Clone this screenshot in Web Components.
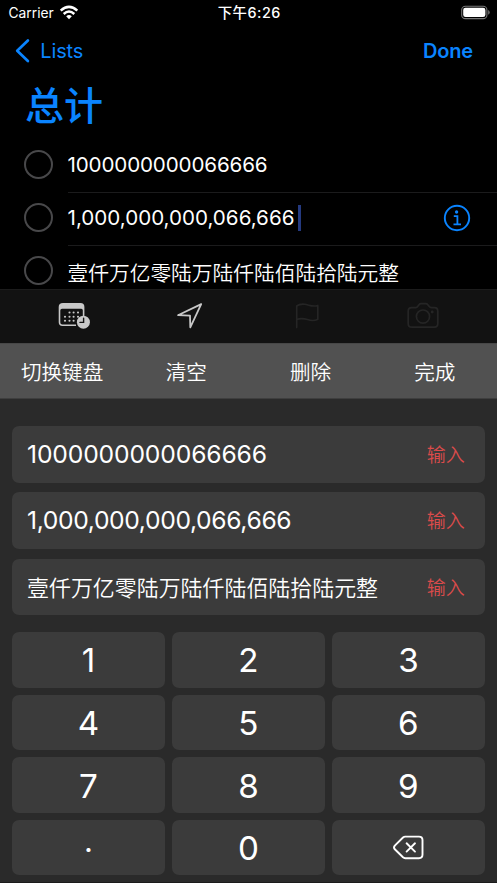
<!DOCTYPE html>
<html lang="zh-CN">
<head>
<meta charset="utf-8">
<title>总计</title>
<style>
html,body{margin:0;padding:0;background:#000;overflow:hidden}
body{width:497px;height:883px;font-family:Inter,"Noto Sans CJK SC",sans-serif;color:#fff}
</style>
</head>
<body>
<reminders-app></reminders-app>
<script>
const define = (name, css, html) => customElements.define(name, class extends HTMLElement {
  constructor() {
    super();
    const t = document.createElement('template');
    t.innerHTML = `<style>:host{box-sizing:border-box}svg{display:block;overflow:visible}${css}</style>${html}`;
    this.attachShadow({mode: 'open'}).append(t.content.cloneNode(true));
  }
});

define('status-bar', `
:host{display:grid;grid-template-columns:1fr auto 1fr;align-items:center;height:25px;padding:1px 7px 0 8.5px;font-size:13.8px;line-height:24px}
.l{display:flex;align-items:center;gap:6px}
.time{font-weight:500;font-size:14.4px;letter-spacing:.5px}
.r{display:flex;justify-content:flex-end}`,
`<div class="l"><span>Carrier</span><svg width="18" height="14" viewBox="0 0 18 14" fill="none" stroke="#fff" stroke-width="2.5"><path d="M.7 4.7Q9-2.9 17.3 4.7"/><path d="M3.7 8Q9 3.1 14.3 8"/><path d="M9 13.3 6.2 10.3Q9 7.9 11.8 10.3Z" fill="#fff" stroke="none"/></svg></div>
<span class="time">下午6:26</span>
<div class="r"><svg width="29" height="14" viewBox="0 0 29 14"><rect x=".7" y=".2" width="25.2" height="12.4" rx="3.7" fill="none" stroke="#777" stroke-width="1.1"/><rect x="2.2" y="1.7" width="22.2" height="9.4" rx="2.3" fill="#fff"/><path d="M27.2 4.1q1.5.8 1.5 2.3t-1.5 2.3z" fill="#777"/></svg></div>`);

define('nav-bar', `
:host{display:flex;justify-content:space-between;align-items:center;height:52px;padding:0 24px 0 15px;color:#0a84ff;font-size:20px;line-height:26px}
.back{display:flex;align-items:center;gap:10.3px;letter-spacing:-.15px}
.done{font-weight:600;letter-spacing:-.2px}`,
`<div class="back"><svg width="15" height="24" viewBox="0 0 15 24" fill="none" stroke="currentColor" stroke-width="2.7" stroke-linecap="round" stroke-linejoin="round"><path d="M12.9 1.5 2.2 11.8 12.9 22"/></svg><span><slot name="back"></slot></span></div><span class="done"><slot name="action"></slot></span>`);

define('reminder-row', `
:host{display:flex;height:53.2px;padding-left:24px;font-size:20.6px}
:host([cjk]){font-family:"Noto Sans CJK SC",sans-serif;font-size:20.72px;font-weight:350}
.c{width:29px;height:29px;box-sizing:border-box;border:2px solid #48484a;border-radius:50%;margin:10.2px 14.5px 0 0;flex:none}
.b{flex:1;display:flex;align-items:center;box-sizing:border-box;border-bottom:1px solid #1b1b1c;line-height:30px;padding:0 26px .8px 0}
.t{white-space:nowrap;letter-spacing:var(--ls,0)}
.caret{display:none;width:2.4px;height:26px;background:#253a80;margin-left:4px}
svg{display:none;margin-left:auto}
:host([active]) .caret,:host([active]) svg{display:block}`,
`<div class="c"></div><div class="b"><span class="t"><slot></slot></span><span class="caret"></span>
<svg width="28" height="28" viewBox="0 0 28 28" fill="none" stroke="#0a84ff"><circle cx="14" cy="14" r="12.2" stroke-width="1.9"/><circle cx="13.6" cy="8" r="1.65" fill="#0a84ff" stroke="none"/><path d="M10.8 12.1H14.4V20.3M10.5 20.3H18" stroke-width="1.8"/></svg></div>`);

define('accessory-bar', `
:host{display:grid;grid-template-columns:119px 118px 112px 33px;align-items:center;height:54px;padding:0 0 1px 58px;background:#121212;border-top:1px solid #1c1c1c;color:#c8c8c8}
.off{color:#252525}`,
`<svg width="33" height="28" viewBox="0 0 33 28"><path fill="currentColor" fill-rule="evenodd" d="M5 1H22.5Q26.4 1 26.4 5V14H24.8V8.2Q24.8 6.7 23.3 6.7H4Q2.3 6.7 2.3 8.4V20.5Q2.3 22.4 4.3 22.4H18V24H4.5Q.7 24 .7 20.3V5Q.7 1 5 1Z"/><g fill="currentColor"><circle cx="11.5" cy="10.5" r="1.05"/><circle cx="15.6" cy="10.5" r="1.05"/><circle cx="20" cy="10.5" r="1.05"/><circle cx="7" cy="14.7" r="1.05"/><circle cx="11.5" cy="14.7" r="1.05"/><circle cx="15.6" cy="14.7" r="1.05"/><circle cx="20" cy="14.7" r="1.05"/><circle cx="7" cy="18.8" r="1.05"/><circle cx="11.5" cy="18.8" r="1.05"/><circle cx="15.6" cy="18.8" r="1.05"/><circle cx="25.4" cy="20.2" r="6.5"/></g><path d="M25.6 16.2V20.4H22" fill="none" stroke="#121212" stroke-width="1.4" stroke-linecap="round"/></svg>
<svg width="26" height="26" viewBox="0 0 26 26" fill="none" stroke="currentColor" stroke-width="1.8" stroke-linejoin="round"><path d="M24.2 1.1 1 12.2 13 12.6 13.3 24.3Z"/></svg>
<svg class="off" width="24" height="26" viewBox="0 0 24 26" fill="none" stroke="currentColor" stroke-width="1.6" stroke-linecap="round" stroke-linejoin="round"><path d="M1.7 24.6V3Q5 .6 9.5 1.2C14.5 1.9 17.5 4.2 22.8 2.4V16.2Q18.5 18.6 12.5 16.6C8.5 15.4 5.5 15.1 1.7 16.4"/></svg>
<svg class="off" width="33" height="26" viewBox="0 0 33 26" fill="none" stroke="currentColor" stroke-width="1.7" stroke-linejoin="round"><path d="M4.7 4.6H8.7Q10 4.6 11 3.1L12 1.7Q12.7.7 14 .7H18.7Q20 .7 20.8 1.7L22 3.3Q23 4.6 24.5 4.6H27.5Q30.8 4.6 30.8 8V20.6Q30.8 24.2 27.5 24.2H4.7Q1.2 24.2 1.2 20.6V8Q1.2 4.6 4.7 4.6Z"/><circle cx="16" cy="13.6" r="6.6"/><circle cx="25.2" cy="9" r="1.4" fill="currentColor" stroke="none"/></svg>`);

define('key-tools', `
:host{display:grid;grid-template-columns:repeat(4,1fr);height:55.5px;background:#515151;border-top:1px solid #474747;border-bottom:1px solid #3e3e3e;font:350 20.6px/54px "Noto Sans CJK SC",sans-serif;text-align:center}`,
`<slot></slot>`);

define('result-row', `
:host{display:flex;align-items:center;justify-content:space-between;height:56.5px;padding:0 20px .6px 15px;background:#3b3b3b;border-radius:7px;font-size:24.7px;line-height:36px}
:host([cjk]) .t{font:350 21.95px/36px "Noto Sans CJK SC",sans-serif}
.t{letter-spacing:var(--ls,0);white-space:nowrap}
.in{font:350 19px/36px "Noto Sans CJK SC",sans-serif;color:#dc4b4b}`,
`<span class="t"><slot></slot></span><span class="in">输入</span>`);

define('num-key', `
:host{display:flex;align-items:center;justify-content:center;background:#3b3b3b;border-radius:7px;font-size:33.2px;line-height:40px;padding-top:1px}
:host([dot]){padding:0 0 13px;font-size:31px}`,
`<slot></slot>`);

define('delete-icon', `:host{display:block}`,
`<svg width="31" height="24" viewBox="0 0 31 24" fill="none" stroke="#fff" stroke-width="1.9" stroke-linejoin="round" stroke-linecap="round"><path d="M12.2 .6H26Q29.5 .6 29.5 4.1V18.6Q29.5 22.2 26 22.2H12.2Q11 22.2 10 21.3L1.8 13.3Q.2 11.5 1.8 9.6L10 1.5Q11 .6 12.2 .6Z"/><path d="M13.6 7.3 22 15.6M22 7.3 13.6 15.6"/></svg>`);

define('number-keyboard', `
:host{display:block;flex:1;background:#2a2a2a;padding:27.8px 12.2px 0 12px;border-bottom:1.5px solid #1b1b1b}
.rows{display:grid;gap:9.7px}
.keys{display:grid;grid-template-columns:repeat(3,1fr);grid-auto-rows:55.5px;gap:7.1px;margin-top:17px}`,
`<div class="rows"><result-row style="--ls:var(--k1)">1000000000066666</result-row><result-row style="--ls:var(--k2)">1,000,000,000,066,666</result-row><result-row cjk>壹仟万亿零陆万陆仟陆佰陆拾陆元整</result-row></div>
<div class="keys">${'123456789'.split('').map(n => `<num-key>${n}</num-key>`).join('')}<num-key dot>.</num-key><num-key>0</num-key><num-key><delete-icon></delete-icon></num-key></div>`);

define('reminders-app', `
:host{display:flex;flex-direction:column;width:497px;height:883px;background:#000;--l1:-.14px;--l2:0px;--k1:-.15px;--k2:-.37px}
h1{margin:0;padding:0 0 0 25px;height:62.5px;font:500 39px/53px "Noto Sans CJK SC",sans-serif;color:#0a84ff}
.list{height:149.5px;overflow:hidden}`,
`<status-bar></status-bar>
<nav-bar><span slot="back">Lists</span><span slot="action">Done</span></nav-bar>
<h1>总计</h1>
<div class="list"><reminder-row style="--ls:var(--l1)">1000000000066666</reminder-row><reminder-row active style="--ls:var(--l2)">1,000,000,000,066,666</reminder-row><reminder-row cjk>壹仟万亿零陆万陆仟陆佰陆拾陆元整</reminder-row></div>
<accessory-bar></accessory-bar>
<key-tools><span>切换键盘</span><span>清空</span><span>删除</span><span>完成</span></key-tools>
<number-keyboard></number-keyboard>`);
</script>
</body>
</html>
